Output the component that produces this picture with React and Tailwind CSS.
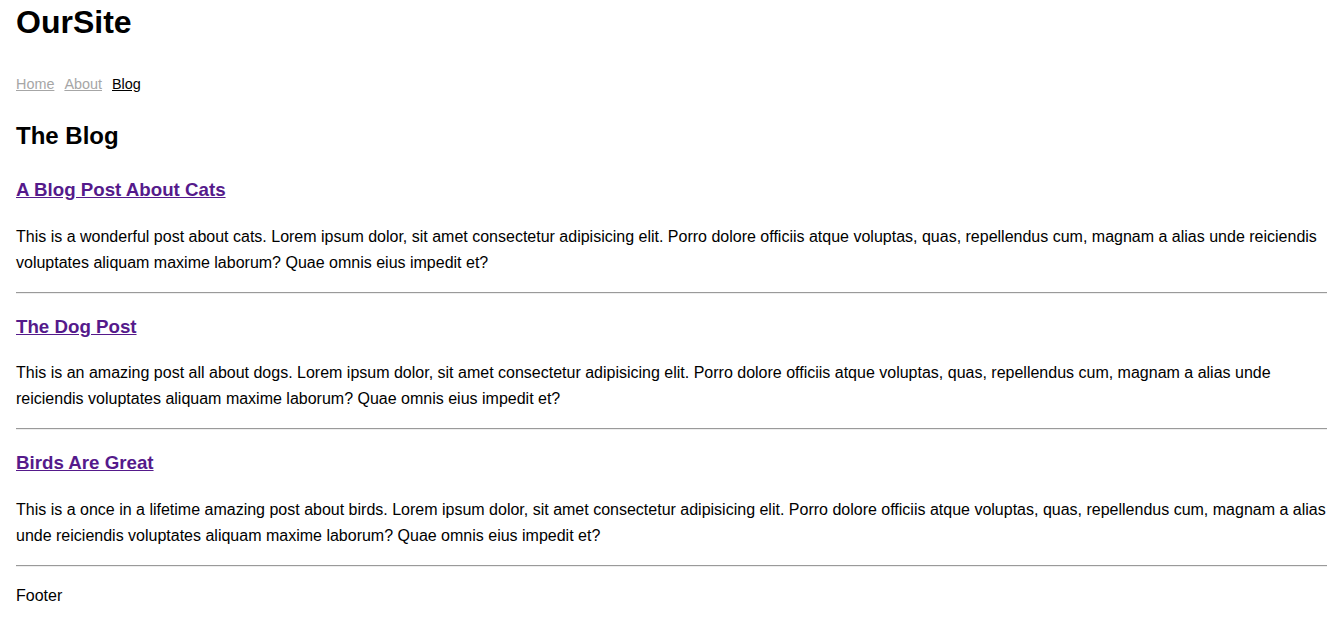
import React from "react";

const posts = [
  {
    title: "A Blog Post About Cats",
    body: "This is a wonderful post about cats. Lorem ipsum dolor, sit amet consectetur adipisicing elit. Porro dolore officiis atque voluptas, quas, repellendus cum, magnam a alias unde reiciendis voluptates aliquam maxime laborum? Quae omnis eius impedit et?",
  },
  {
    title: "The Dog Post",
    body: "This is an amazing post all about dogs. Lorem ipsum dolor, sit amet consectetur adipisicing elit. Porro dolore officiis atque voluptas, quas, repellendus cum, magnam a alias unde reiciendis voluptates aliquam maxime laborum? Quae omnis eius impedit et?",
  },
  {
    title: "Birds Are Great",
    body: "This is a once in a lifetime amazing post about birds. Lorem ipsum dolor, sit amet consectetur adipisicing elit. Porro dolore officiis atque voluptas, quas, repellendus cum, magnam a alias unde reiciendis voluptates aliquam maxime laborum? Quae omnis eius impedit et?",
  },
];

function App() {
  return (
    <div className="min-h-screen bg-white pl-4 pr-[13px] font-['Liberation_Sans',Arial,sans-serif] text-black">

      {/* HEADER */}
      <h1 className="pt-[4px] text-[32px] font-bold leading-[37px]">OurSite</h1>

      <nav className="mt-[33px] flex gap-[10px] text-[14.4px] leading-[20px]">
        <a href="#" className="text-[#a6a6a6] underline">Home</a>
        <a href="#" className="text-[#a6a6a6] underline">About</a>
        <a href="#" className="text-black underline">Blog</a>
      </nav>

      <h2 className="mt-[26px] text-[24px] font-bold leading-[32px]">The Blog</h2>

      {/* POSTS */}
      <div className="mt-[24px] flex flex-col gap-[19px]">
        {posts.map((post) => (
          <article key={post.title}>
            <h3 className="text-[18.72px] font-bold leading-[28px]">
              <a href="#" className="text-[#551a8b] underline">{post.title}</a>
            </h3>
            <p className="mt-[19.5px] text-[16px] leading-[26px]">{post.body}</p>
            <hr className="mt-4 h-0 border-t border-b border-t-[#9a9a9a] border-b-[#eeeeee]" />
          </article>
        ))}
      </div>

      <footer className="mt-[16px] text-[16px] leading-[26px]">Footer</footer>
    </div>
  );
}

export default App;
